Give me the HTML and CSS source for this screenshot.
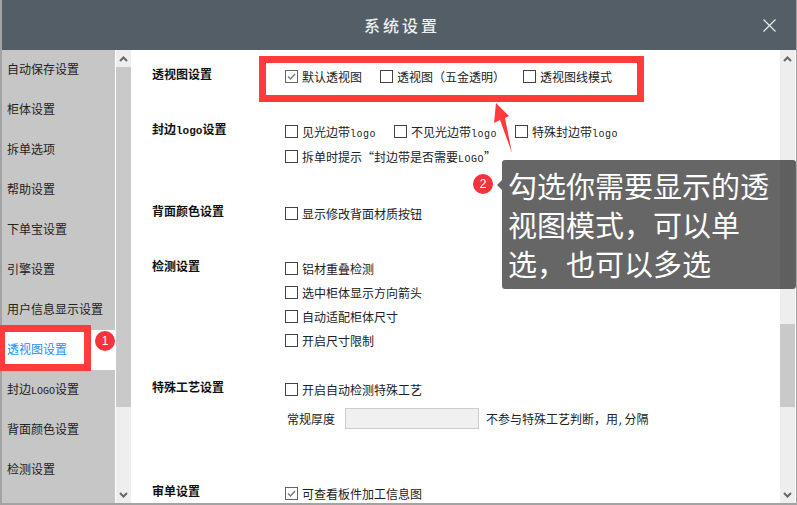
FILE: index.html
```html
<!DOCTYPE html>
<html lang="zh-CN">
<head>
  <meta charset="UTF-8">
  <title>系统设置</title>
  <link rel="stylesheet" href="styles.css">
</head>
<body>
  <div class="window">
    <div class="header">
      <span class="header-title">系统设置</span>
      <svg class="close" width="13" height="13" viewBox="0 0 13 13"><path d="M0.5 0.5L12.5 12.5M12.5 0.5L0.5 12.5" stroke="#e8eaec" stroke-width="1.2" fill="none"/></svg>
    </div>
    <div class="body">
      <div class="sidebar">
        <div class="nav-item">自动保存设置</div>
        <div class="nav-item">柜体设置</div>
        <div class="nav-item">拆单选项</div>
        <div class="nav-item">帮助设置</div>
        <div class="nav-item">下单宝设置</div>
        <div class="nav-item">引擎设置</div>
        <div class="nav-item">用户信息显示设置</div>
        <div class="nav-item active">透视图设置</div>
        <div class="nav-item">封边<span class="latin">LOGO</span>设置</div>
        <div class="nav-item">背面颜色设置</div>
        <div class="nav-item">检测设置</div>
        <div class="nav-item">特殊工艺设置</div>
      </div>
      <div class="scrollbar scrollbar-left">
        <div class="scroll-btn"><svg width="9" height="6" viewBox="0 0 9 6"><path d="M1 5L4.5 1.5L8 5" stroke="#666" stroke-width="2" fill="none"/></svg></div>
        <div class="thumb"></div>
        <div class="track"></div>
        <div class="scroll-btn"><svg width="9" height="6" viewBox="0 0 9 6"><path d="M1 1L4.5 4.5L8 1" stroke="#666" stroke-width="2" fill="none"/></svg></div>
      </div>
      <div class="content">
        <div class="section sec-view">
          <div class="section-title">透视图设置</div>
          <div class="options">
            <div class="line">
              <label class="opt"><span class="cb checked"><svg width="11" height="11" viewBox="0 0 11 11"><path d="M2 5.5L4.5 8L9 3" stroke="#777" stroke-width="1.3" fill="none"/></svg></span><span>默认透视图</span></label>
              <label class="opt"><span class="cb"></span><span>透视图（五金透明）</span></label>
              <label class="opt"><span class="cb"></span><span>透视图线模式</span></label>
            </div>
          </div>
        </div>
        <div class="section sec-edge">
          <div class="section-title">封边<span class="latin">logo</span>设置</div>
          <div class="options">
            <div class="line">
              <label class="opt"><span class="cb"></span><span>见光边带<span class="latin">logo</span></span></label>
              <label class="opt"><span class="cb"></span><span>不见光边带<span class="latin">logo</span></span></label>
              <label class="opt"><span class="cb"></span><span>特殊封边带<span class="latin">logo</span></span></label>
            </div>
            <div class="line">
              <label class="opt"><span class="cb"></span><span>拆单时提示“封边带是否需要<span class="latin">LOGO</span>”</span></label>
            </div>
          </div>
        </div>
        <div class="section sec-back">
          <div class="section-title">背面颜色设置</div>
          <div class="options">
            <div class="line">
              <label class="opt"><span class="cb"></span><span>显示修改背面材质按钮</span></label>
            </div>
          </div>
        </div>
        <div class="section sec-check">
          <div class="section-title">检测设置</div>
          <div class="options">
            <div class="line"><label class="opt"><span class="cb"></span><span>铝材重叠检测</span></label></div>
            <div class="line"><label class="opt"><span class="cb"></span><span>选中柜体显示方向箭头</span></label></div>
            <div class="line"><label class="opt"><span class="cb"></span><span>自动适配柜体尺寸</span></label></div>
            <div class="line"><label class="opt"><span class="cb"></span><span>开启尺寸限制</span></label></div>
          </div>
        </div>
        <div class="section sec-craft">
          <div class="section-title">特殊工艺设置</div>
          <div class="options">
            <div class="line"><label class="opt"><span class="cb"></span><span>开启自动检测特殊工艺</span></label></div>
            <div class="line thick-row">
              <span class="thick-label">常规厚度</span>
              <input class="thick-input" type="text">
              <span>不参与特殊工艺判断，用<span class="latin">,</span>分隔</span>
            </div>
          </div>
        </div>
        <div class="section">
          <div class="section-title">审单设置</div>
          <div class="options">
            <div class="line"><label class="opt"><span class="cb checked"><svg width="11" height="11" viewBox="0 0 11 11"><path d="M2 5.5L4.5 8L9 3" stroke="#777" stroke-width="1.3" fill="none"/></svg></span><span>可查看板件加工信息图</span></label></div>
          </div>
        </div>
      </div>
      <div class="scrollbar scrollbar-right">
        <div class="scroll-btn"><svg width="9" height="6" viewBox="0 0 9 6"><path d="M1 5L4.5 1.5L8 5" stroke="#666" stroke-width="2" fill="none"/></svg></div>
        <div class="track track-top"></div>
        <div class="thumb thumb-right"></div>
        <div class="track"></div>
        <div class="scroll-btn"><svg width="9" height="6" viewBox="0 0 9 6"><path d="M1 1L4.5 4.5L8 1" stroke="#666" stroke-width="2" fill="none"/></svg></div>
      </div>
    </div>
  </div>

  <!-- annotations on top of the screenshot -->
  <div class="frame frame-options"></div>
  <div class="frame frame-nav"></div>
  <div class="badge badge-1">1</div>
  <div class="badge badge-2">2</div>
  <svg class="arrow" width="24" height="54" viewBox="0 0 24 54"><polygon points="6,0 19,13 15,15 22,50 10,17 4,20" fill="#ff3b3b"/></svg>
  <div class="tip">勾选你需要显示的透<br>视图模式，可以单<br>选，也可以多选</div>
</body>
</html>
```

FILE: styles.css
```css
html, body {
  margin: 0;
  padding: 0;
  height: 100%;
  overflow: hidden;
  background: #fff;
}
body {
  font-family: "Noto Sans CJK SC", sans-serif;
  font-size: 12px;
  color: #222;
}
.latin {
  font-family: "Liberation Mono", monospace;
  font-size: 10px;
  line-height: 1;
}
.window {
  height: 503px;
  display: flex;
  flex-direction: column;
  border-left: 2px solid #a3a3a3;
  border-right: 1px solid #a3a3a3;
  border-bottom: 2px solid #a3a3a3;
}
.header {
  height: 50px;
  flex: none;
  background: #545e67;
  display: flex;
  align-items: center;
  justify-content: center;
  position: relative;
}
.header-title {
  color: #eceeef;
  font-size: 16px;
  font-weight: 500;
  letter-spacing: 3px;
  margin-top: -1px;
  margin-left: 6px;
}
.close {
  position: absolute;
  right: 20px;
  top: 19px;
}
.body {
  flex: 1;
  display: flex;
  min-height: 0;
  overflow: hidden;
}
.sidebar {
  width: 113px;
  flex: none;
  background: #c6c6c6;
  overflow: hidden;
  border-right: 1px solid #fff;
}
.nav-item {
  height: 40px;
  line-height: 38px;
  padding-left: 5px;
  white-space: nowrap;
}
.nav-item.active {
  background: #fff;
  color: #1890ff;
}
.scrollbar {
  width: 15px;
  flex: none;
  display: flex;
  flex-direction: column;
  background: #eeeeee;
}
.scrollbar-right {
  margin-right: 1px;
}
.scroll-btn {
  height: 17px;
  flex: none;
  display: flex;
  align-items: center;
  justify-content: center;
}
.thumb {
  background: #c9c9c9;
  height: 340px;
  flex: none;
}
.thumb-right {
  height: 83px;
}
.track {
  flex: 1;
}
.track-top {
  flex: none;
  height: 257px;
}
.content {
  flex: 1;
  min-width: 0;
  margin-left: 1px;
  padding: 14px 0 0 20px;
  overflow: hidden;
}
.section {
  display: flex;
}
.sec-view { margin-bottom: 31px; }
.sec-edge { margin-bottom: 32px; }
.sec-back { margin-bottom: 31px; }
.sec-check { margin-bottom: 25px; }
.sec-craft { margin-bottom: 52px; }
.section-title {
  width: 133px;
  flex: none;
  font-weight: 700;
  line-height: 20px;
  color: #111;
}
.section-title .latin {
  font-size: 11px;
}
.line {
  display: flex;
  align-items: center;
  height: 24px;
  gap: 18px;
  white-space: nowrap;
}
.sec-edge .line {
  height: 25px;
}
.options .latin {
  letter-spacing: 0.5px;
}
.opt {
  display: flex;
  align-items: center;
}
.cb {
  width: 11px;
  height: 11px;
  border: 1px solid #444;
  margin-right: 4px;
  flex: none;
  display: block;
}
.cb.checked {
  border-color: #666;
}
.cb svg {
  display: block;
}
.thick-row {
  height: 21px;
  margin-top: 7px;
  gap: 7px;
}
.thick-label {
  margin-left: 2px;
  margin-right: 3px;
}
.thick-input {
  width: 132px;
  height: 19px;
  padding: 0;
  border: 1px solid #ccc;
  background: #f0f0f0;
  box-sizing: content-box;
}

/* annotations */
.frame {
  position: absolute;
  border: 7px solid #ff3b3b;
  box-sizing: border-box;
}
.frame-options {
  left: 259px;
  top: 56px;
  width: 385px;
  height: 46px;
}
.frame-nav {
  left: 0;
  top: 325px;
  width: 91px;
  height: 46px;
  border-left-width: 5px;
}
.badge {
  position: absolute;
  width: 20px;
  height: 20px;
  border-radius: 50%;
  background: #f5333a;
  color: #fff;
  font-family: "Liberation Sans", sans-serif;
  font-size: 12px;
  line-height: 20px;
  text-align: center;
}
.badge-1 { left: 95px; top: 331px; }
.badge-2 { left: 473px; top: 174px; }
.arrow {
  position: absolute;
  left: 490px;
  top: 103px;
}
.tip {
  position: absolute;
  left: 502px;
  top: 160px;
  width: 294px;
  height: 129px;
  box-sizing: border-box;
  padding: 6px 0 0 6px;
  background: rgba(0, 0, 0, 0.6);
  border-radius: 3px;
  color: #fff;
  font-size: 29px;
  line-height: 39px;
  white-space: nowrap;
}
.tip::before {
  content: "";
  position: absolute;
  left: -5px;
  top: 20px;
  border-style: solid;
  border-width: 5px 5px 5px 0;
  border-color: transparent #666 transparent transparent;
}
```
